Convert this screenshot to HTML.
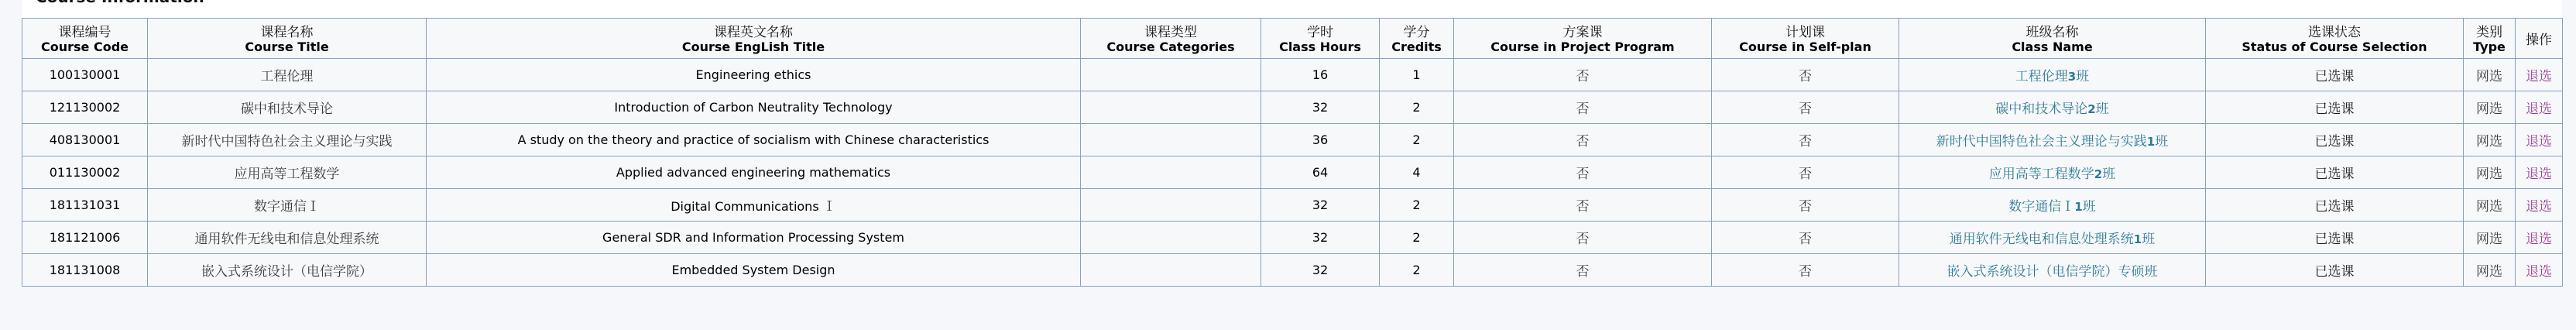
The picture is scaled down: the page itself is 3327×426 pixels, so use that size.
<!DOCTYPE html>
<html><head><meta charset="utf-8">
<style>
html,body{margin:0;padding:0;}
body{width:3327px;height:426px;background:#f5f7fa;position:relative;overflow:hidden;font-family:"DejaVu Sans","Liberation Sans","Noto Sans CJK SC",sans-serif;}
.panel{position:absolute;left:28px;top:0;width:3281px;height:23px;background:#fff;}
.title{position:absolute;left:46px;top:-16px;font-size:20px;font-weight:bold;color:#111;white-space:nowrap;}
table{position:absolute;left:28px;top:23px;border-collapse:collapse;table-layout:fixed;width:3282px;background:#f7f8fa;}
td,th{border:1px solid #86a0c0;text-align:center;padding:0;white-space:nowrap;overflow:hidden;}
th{height:51px;font-size:16px;font-weight:bold;color:#000;line-height:21px;}
th .cn{font-family:"Noto Serif CJK SC","WenQuanYi Zen Hei",serif;font-weight:normal;font-size:17px;display:block;color:#111;}
td{height:41px;font-size:16px;color:#000;}
.s{font-family:"Noto Serif CJK SC",serif;font-size:17px;color:#3a3a3a;}
.l{font-family:"Noto Serif CJK SC",serif;font-size:17px;color:#2e7a96;}
.l b{font-family:"DejaVu Sans",sans-serif;font-weight:bold;font-size:15px;}
.q{font-family:"Noto Serif CJK SC",serif;font-size:17px;color:#9a3d8e;}
.k{font-family:"Noto Serif CJK SC",serif;font-size:17px;color:#1a1a1a;}
</style></head><body>
<div class="panel"></div>
<div class="title">Course Information</div>
<table>
<colgroup>
<col style="width:162px"><col style="width:360px"><col style="width:845px"><col style="width:233px"><col style="width:153px"><col style="width:96px"><col style="width:333px"><col style="width:242px"><col style="width:396px"><col style="width:333px"><col style="width:67px"><col style="width:61px">
</colgroup>
<tr>
<th><span class="cn">课程编号</span>Course Code</th>
<th><span class="cn">课程名称</span>Course Title</th>
<th><span class="cn">课程英文名称</span>Course EngLish Title</th>
<th><span class="cn">课程类型</span>Course Categories</th>
<th><span class="cn">学时</span>Class Hours</th>
<th><span class="cn">学分</span>Credits</th>
<th><span class="cn">方案课</span>Course in Project Program</th>
<th><span class="cn">计划课</span>Course in Self-plan</th>
<th><span class="cn">班级名称</span>Class Name</th>
<th><span class="cn">选课状态</span>Status of Course Selection</th>
<th><span class="cn">类别</span>Type</th>
<th><span class="cn">操作</span></th>
</tr>
<tr><td>100130001</td><td class="s">工程伦理</td><td>Engineering ethics</td><td></td><td>16</td><td>1</td><td class="s">否</td><td class="s">否</td><td class="l">工程伦理<b>3</b>班</td><td class="k">已选课</td><td class="s">网选</td><td class="q">退选</td></tr>
<tr><td>121130002</td><td class="s">碳中和技术导论</td><td>Introduction of Carbon Neutrality Technology</td><td></td><td>32</td><td>2</td><td class="s">否</td><td class="s">否</td><td class="l">碳中和技术导论<b>2</b>班</td><td class="k">已选课</td><td class="s">网选</td><td class="q">退选</td></tr>
<tr><td>408130001</td><td class="s">新时代中国特色社会主义理论与实践</td><td>A study on the theory and practice of socialism with Chinese characteristics</td><td></td><td>36</td><td>2</td><td class="s">否</td><td class="s">否</td><td class="l">新时代中国特色社会主义理论与实践<b>1</b>班</td><td class="k">已选课</td><td class="s">网选</td><td class="q">退选</td></tr>
<tr><td>011130002</td><td class="s">应用高等工程数学</td><td>Applied advanced engineering mathematics</td><td></td><td>64</td><td>4</td><td class="s">否</td><td class="s">否</td><td class="l">应用高等工程数学<b>2</b>班</td><td class="k">已选课</td><td class="s">网选</td><td class="q">退选</td></tr>
<tr><td>181131031</td><td class="s">数字通信Ⅰ</td><td>Digital Communications <span class="s">Ⅰ</span></td><td></td><td>32</td><td>2</td><td class="s">否</td><td class="s">否</td><td class="l">数字通信Ⅰ<b>1</b>班</td><td class="k">已选课</td><td class="s">网选</td><td class="q">退选</td></tr>
<tr><td>181121006</td><td class="s">通用软件无线电和信息处理系统</td><td>General SDR and Information Processing System</td><td></td><td>32</td><td>2</td><td class="s">否</td><td class="s">否</td><td class="l">通用软件无线电和信息处理系统<b>1</b>班</td><td class="k">已选课</td><td class="s">网选</td><td class="q">退选</td></tr>
<tr><td>181131008</td><td class="s">嵌入式系统设计（电信学院）</td><td>Embedded System Design</td><td></td><td>32</td><td>2</td><td class="s">否</td><td class="s">否</td><td class="l">嵌入式系统设计（电信学院）专硕班</td><td class="k">已选课</td><td class="s">网选</td><td class="q">退选</td></tr>
</table>
</body></html>
